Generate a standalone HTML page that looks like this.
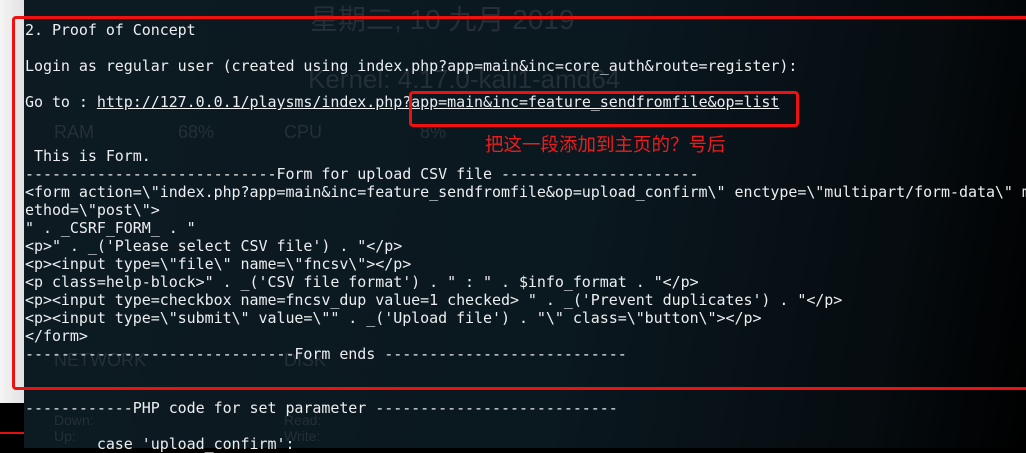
<!DOCTYPE html>
<html><head><meta charset="utf-8"><style>
body{margin:0;width:1026px;height:448px;overflow:hidden;background:#000;position:relative;font-family:"DejaVu Sans Mono","Liberation Mono",monospace}
.strip{position:absolute;left:0;top:0;width:24px;height:403px;background:linear-gradient(90deg,#f4f4f4,#e2e2e2)}
.term{position:absolute;left:24px;top:0;width:1002px;height:448px;background:linear-gradient(100deg,#0d1a22 0%,#0a1820 55%,#060c10 85%,#000 100%)}
.bg{position:absolute;color:#252f37;font-family:"Liberation Sans","Noto Sans CJK SC",sans-serif}
pre{position:absolute;left:25px;top:21px;margin:0;font-size:15px;line-height:18px;color:#eceef0;letter-spacing:-0.05px;font-family:"DejaVu Sans Mono",monospace}
u{text-decoration:underline}
.box{position:absolute;border:3px solid #f01010;border-radius:4px}
.cn{position:absolute;left:485px;top:131px;color:#ee1c1c;font-size:18.5px;font-family:"Noto Sans CJK SC",sans-serif}
</style></head><body>
<div class="strip"></div>
<div class="term"></div>
<div class="bg" style="left:310px;top:-2px;font-size:28px">星期二, 10 九月 2019</div>
<div class="bg" style="left:308px;top:64px;font-size:26px">Kernel: 4.17.0-kali1-amd64</div>
<div class="bg" style="left:54px;top:122px;font-size:18px">RAM</div>
<div class="bg" style="left:178px;top:122px;font-size:18px">68%</div>
<div class="bg" style="left:284px;top:122px;font-size:18px">CPU</div>
<div class="bg" style="left:420px;top:122px;font-size:18px">8%</div>
<div class="bg" style="left:54px;top:350px;font-size:18px">NETWORK</div>
<div class="bg" style="left:284px;top:350px;font-size:18px">DISK</div>
<div class="bg" style="left:54px;top:412px;font-size:14px">Down:</div>
<div class="bg" style="left:54px;top:428px;font-size:14px">Up:</div>
<div class="bg" style="left:284px;top:412px;font-size:14px">Read:</div>
<div class="bg" style="left:284px;top:428px;font-size:14px">Write:</div>
<pre>2. Proof of Concept

Login as regular user (created using index.php?app=main&amp;inc=core_auth&amp;route=register):

Go to : <u>http://127.0.0.1/playsms/index.php?app=main&amp;inc=feature_sendfromfile&amp;op=list</u>


 This is Form.
----------------------------Form for upload CSV file ----------------------
&lt;form action=\"index.php?app=main&amp;inc=feature_sendfromfile&amp;op=upload_confirm\" enctype=\"multipart/form-data\" m
ethod=\"post\"&gt;
" . _CSRF_FORM_ . "
&lt;p&gt;" . _('Please select CSV file') . "&lt;/p&gt;
&lt;p&gt;&lt;input type=\"file\" name=\"fncsv\"&gt;&lt;/p&gt;
&lt;p class=help-block&gt;" . _('CSV file format') . " : " . $info_format . "&lt;/p&gt;
&lt;p&gt;&lt;input type=checkbox name=fncsv_dup value=1 checked&gt; " . _('Prevent duplicates') . "&lt;/p&gt;
&lt;p&gt;&lt;input type=\"submit\" value=\"" . _('Upload file') . "\" class=\"button\"&gt;&lt;/p&gt;
&lt;/form&gt;
------------------------------Form ends ---------------------------


------------PHP code for set parameter ---------------------------

        case 'upload_confirm':</pre>
<div class="box" style="left:12px;top:16px;width:1020px;height:368px"></div>
<div class="box" style="left:409px;top:91px;width:384px;height:30px"></div>
<div class="cn">把这一段添加到主页的？号后</div>
<div style="position:absolute;left:0;top:432px;width:24px;height:2px;background:#e01010"></div>
</body></html>
